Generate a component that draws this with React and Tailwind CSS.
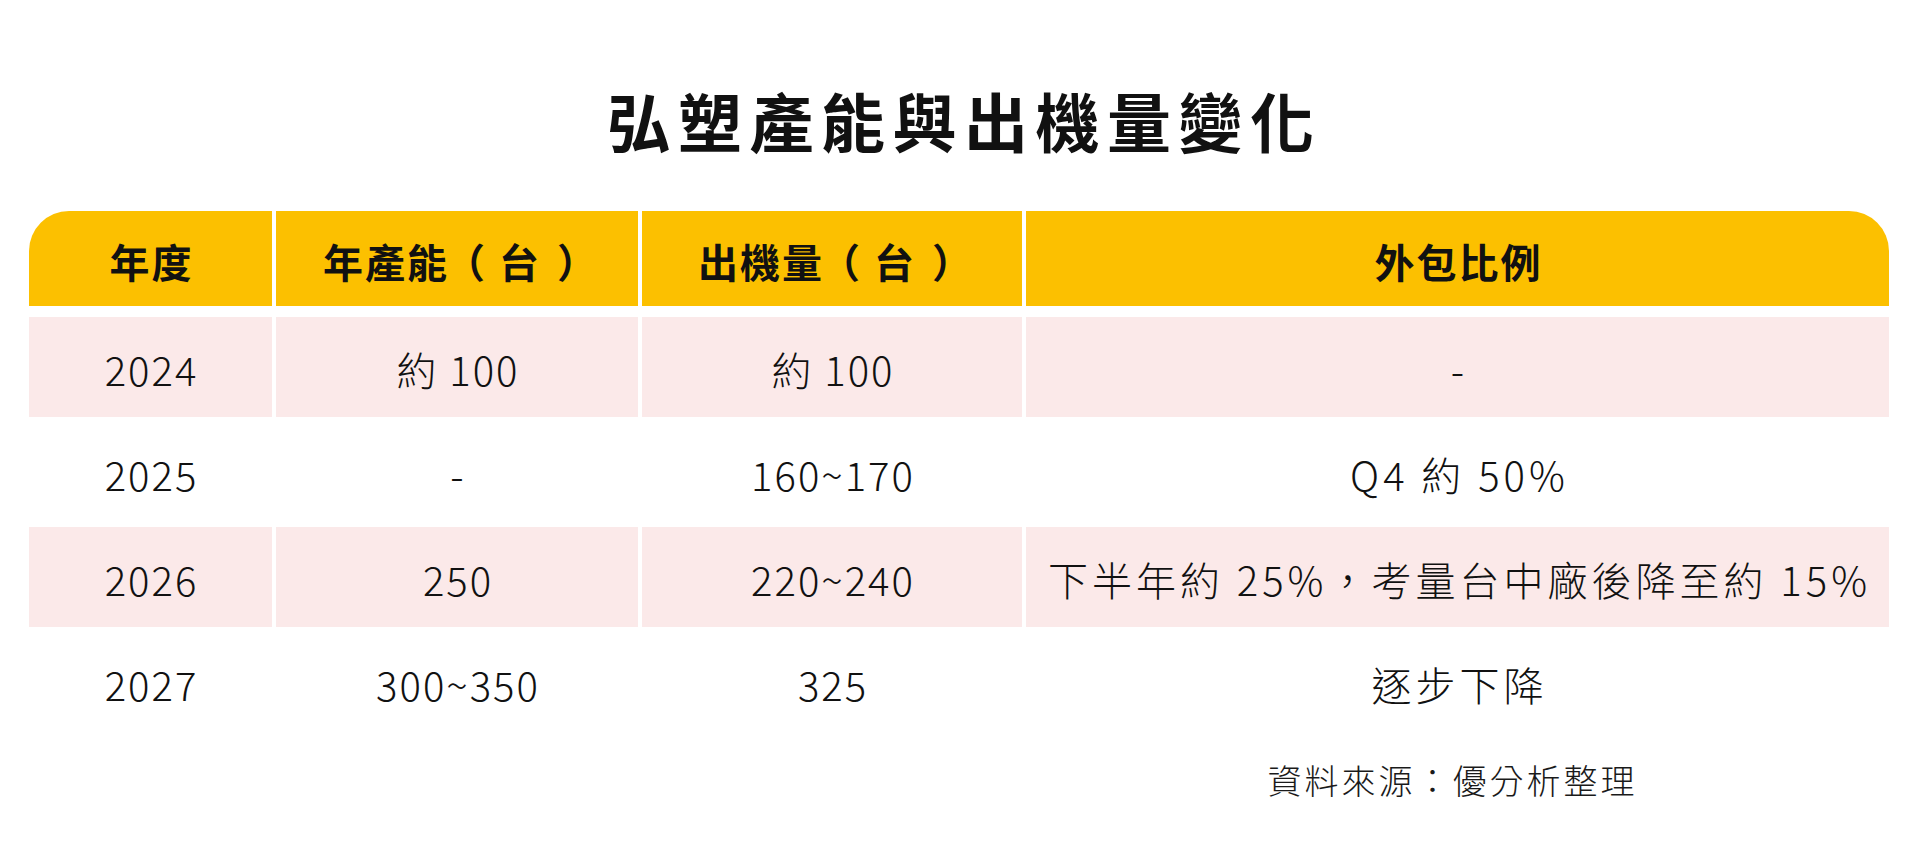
import React from 'react'

const rows = [
  { year: '2024', cap: '約 100', out: '約 100', ratio: '-', pink: true },
  { year: '2025', cap: '-', out: '160~170', ratio: 'Q4 約 50%', pink: false },
  { year: '2026', cap: '250', out: '220~240', ratio: '下半年約 25%，考量台中廠後降至約 15%', pink: true },
  { year: '2027', cap: '300~350', out: '325', ratio: '逐步下降', pink: false },
]

const Paren = ({ children, side }) => (
  <span className={'inline-block ' + (side === 'l' ? 'translate-x-[-4px] pr-[8px]' : 'translate-x-[6px] pl-[10px]')}>{children}</span>
)

const heads = [
  '年度',
  <>年產能<Paren side="l">（</Paren>台<Paren side="r">）</Paren></>,
  <>出機量<Paren side="l">（</Paren>台<Paren side="r">）</Paren></>,
  '外包比例',
]

const Cell = ({ children, pink, wide }) => (
  <div
    className={
      'flex items-center justify-center pt-[4px] text-[40px] font-light leading-none tabular-nums text-[#111] ' +
      (wide ? 'tracking-[4px] pl-[4px] ' : 'tracking-[2px] pl-[2px] ') +
      (pink ? 'bg-[#fbe9e9]' : 'bg-white')
    }
  >
    {children}
  </div>
)

const App = () => {
  return (
    <div className="h-[853px] w-[1920px] overflow-hidden bg-white font-['Noto_Sans_CJK_TC','Noto_Sans',sans-serif]">
      <h1 className="pt-[87px] pl-[8px] text-center text-[64px] font-bold leading-[64px] tracking-[7.5px] text-[#111]">
        弘塑產能與出機量變化
      </h1>

      <div className="ml-[29px] mt-[60px] w-[1860px]">
        {/* header */}
        <div className="grid h-[95px] grid-cols-[243px_362px_380px_1fr] gap-x-[4px]">
          {heads.map((h, i) => (
            <div
              key={i}
              className={
                'flex items-center justify-center pt-[4px] pl-[2px] bg-[#fcc000] text-[40px] font-bold leading-none tracking-[2px] text-[#111] ' +
                (i === 0 ? 'rounded-tl-[40px]' : '') +
                (i === 3 ? 'rounded-tr-[40px]' : '')
              }
            >
              {h}
            </div>
          ))}
        </div>

        {/* body */}
        <div className="mt-[11px] flex flex-col gap-y-[5px]">
          {rows.map((r) => (
            <div key={r.year} className="grid h-[100px] grid-cols-[243px_362px_380px_1fr] gap-x-[4px]">
              <Cell pink={r.pink}>{r.year}</Cell>
              <Cell pink={r.pink}>{r.cap}</Cell>
              <Cell pink={r.pink}>{r.out}</Cell>
              <Cell pink={r.pink} wide>{r.ratio}</Cell>
            </div>
          ))}
        </div>

        {/* source */}
        <div className="mt-[28px] grid grid-cols-[243px_362px_380px_1fr] gap-x-[4px]">
          <div className="col-start-4 pr-[10px] text-center text-[34px] font-light leading-[40px] tracking-[3px] text-[#1a1a1a]">
            資料來源：優分析整理
          </div>
        </div>
      </div>
    </div>
  )
}

export default App
